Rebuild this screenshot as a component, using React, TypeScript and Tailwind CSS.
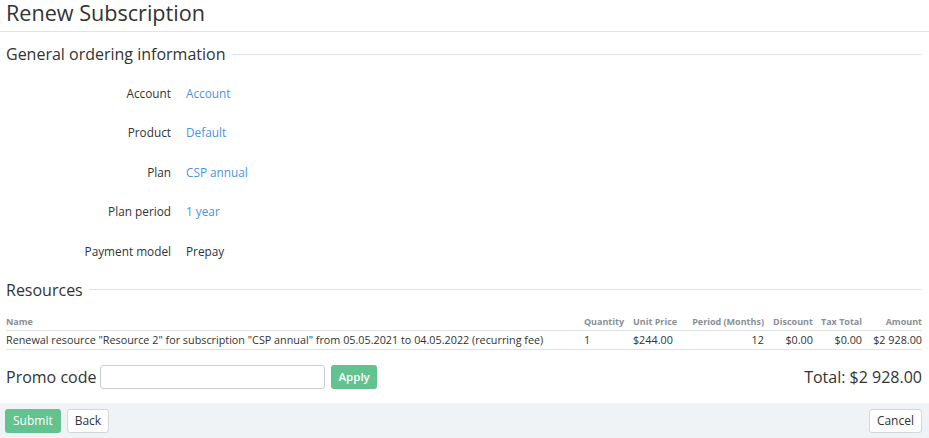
export default function App() {
  const rows = [
    { label: "Account", value: "Account", link: true },
    { label: "Product", value: "Default", link: true },
    { label: "Plan", value: "CSP annual", link: true },
    { label: "Plan period", value: "1 year", link: true },
    { label: "Payment model", value: "Prepay", link: false },
  ];

  return (
    <div className="flex h-[438px] w-[929px] flex-col bg-white font-['Open_Sans',sans-serif] text-[#333]">
      {/* page title */}
      <div className="h-[32px] border-b border-[#dfe2e6] px-[6px]">
        <h1 className="text-[21.6px] leading-[25px]">Renew Subscription</h1>
      </div>

      <div className="flex-1 pl-[6px] pr-[7px]">
        {/* General ordering information */}
        <div className="mt-[11px] flex items-center">
          <h2 className="text-[16px] leading-[22px]">General ordering information</h2>
          <div className="ml-[6px] h-px flex-1 bg-[#dfe2e6]" />
        </div>

        <div className="mt-[9px] flex flex-col">
          {rows.map((r) => (
            <div key={r.label} className="flex h-[39.5px] items-center text-[11.8px]">
              <div className="w-[165px] text-right">{r.label}</div>
              <div className={"ml-[15px] " + (r.link ? "text-[#4a95dd]" : "")}>{r.value}</div>
            </div>
          ))}
        </div>

        {/* Resources */}
        <div className="mt-[7px] flex items-center">
          <h2 className="text-[16px] leading-[22px]">Resources</h2>
          <div className="ml-[6px] h-px flex-1 bg-[#dfe2e6]" />
        </div>

        <table className="mt-[10px] w-full border-collapse text-[10.8px]">
          <thead>
            <tr className="h-[20px] whitespace-nowrap border-b border-[#dfe2e6] text-[9px] font-bold text-[#8a8f94]">
              <th className="pt-[2px] text-left">Name</th>
              <th className="w-[49px] px-[4px] pt-[2px] text-left">Quantity</th>
              <th className="w-[59px] px-[4px] pt-[2px] text-left">Unit Price</th>
              <th className="w-[80px] px-[4px] pt-[2px] text-right">Period (Months)</th>
              <th className="w-[49px] px-[4px] pt-[2px] text-right">Discount</th>
              <th className="w-[49px] px-[4px] pt-[2px] text-right">Tax Total</th>
              <th className="w-[56px] pl-[4px] pr-0 pt-[2px] text-right">Amount</th>
            </tr>
          </thead>
          <tbody>
            <tr className="h-[19px] border-b border-[#dfe2e6]">
              <td className="whitespace-nowrap text-left">
                Renewal resource "Resource 2" for subscription "CSP annual" from 05.05.2021 to 04.05.2022 (recurring fee)
              </td>
              <td className="px-[4px] text-left">1</td>
              <td className="px-[4px] text-left">$244.00</td>
              <td className="px-[4px] text-right">12</td>
              <td className="px-[4px] text-right">$0.00</td>
              <td className="px-[4px] text-right">$0.00</td>
              <td className="whitespace-nowrap pl-[4px] text-right">$2 928.00</td>
            </tr>
          </tbody>
        </table>

        {/* promo + total */}
        <div className="mt-[15px] flex items-center">
          <span className="text-[16px] leading-[24px]">Promo code</span>
          <input
            type="text"
            className="ml-[4px] h-[24px] w-[225px] rounded-[3px] border border-[#c9ced4] bg-white px-[6px] text-[12px] outline-none"
          />
          <button className="ml-[6px] h-[24px] rounded-[3px] bg-[#62c38f] px-[7px] text-[11.5px] font-semibold text-white">
            Apply
          </button>
          <span className="ml-auto text-[16px] leading-[24px]">Total: $2 928.00</span>
        </div>
      </div>

      {/* footer */}
      <div className="flex h-[35px] items-center bg-[#f0f3f6] pl-[5px] pr-[7px]">
        <button className="h-[24px] rounded-[3px] bg-[#62c38f] px-[8px] text-[12px] text-white">Submit</button>
        <button className="ml-[6px] h-[24px] rounded-[3px] border border-[#d3d7db] bg-white px-[7px] text-[12px]">
          Back
        </button>
        <button className="ml-auto h-[24px] rounded-[3px] border border-[#d3d7db] bg-white px-[7px] text-[12px]">
          Cancel
        </button>
      </div>
    </div>
  );
}
